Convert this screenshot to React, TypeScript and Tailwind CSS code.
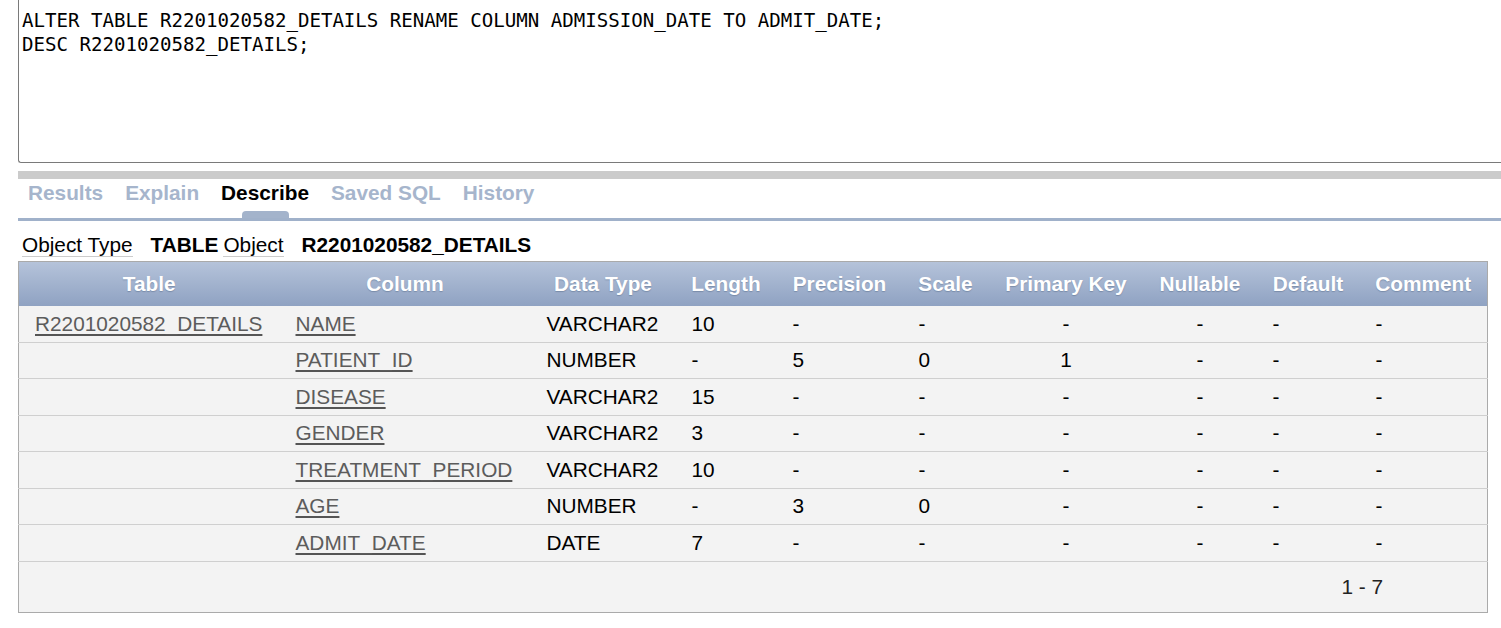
import React from "react";

const cols = [
  { name: "Table", w: 261, align: "left" },
  { name: "Column", w: 251, align: "left" },
  { name: "Data Type", w: 145, align: "left" },
  { name: "Length", w: 101, align: "left" },
  { name: "Precision", w: 126, align: "left" },
  { name: "Scale", w: 86, align: "left" },
  { name: "Primary Key", w: 155, align: "center" },
  { name: "Nullable", w: 113, align: "center" },
  { name: "Default", w: 103, align: "left" },
  { name: "Comment", w: 128, align: "left" },
];

const rows = [
  ["NAME", "VARCHAR2", "10", "-", "-", "-"],
  ["PATIENT_ID", "NUMBER", "-", "5", "0", "1"],
  ["DISEASE", "VARCHAR2", "15", "-", "-", "-"],
  ["GENDER", "VARCHAR2", "3", "-", "-", "-"],
  ["TREATMENT_PERIOD", "VARCHAR2", "10", "-", "-", "-"],
  ["AGE", "NUMBER", "-", "3", "0", "-"],
  ["ADMIT_DATE", "DATE", "7", "-", "-", "-"],
];

const tabs = ["Results", "Explain", "Describe", "Saved SQL", "History"];

function Cell({ children, center }: { children?: React.ReactNode; center?: boolean }) {
  return (
    <td
      className={
        center
          ? "h-[36.5px] border-b border-[#cfcfcf] text-center align-middle"
          : "h-[36.5px] border-b border-[#cfcfcf] pl-4 text-left align-middle"
      }
    >
      {children}
    </td>
  );
}

export default function App() {
  return (
    <div className="min-h-screen bg-white pl-[18px] font-['Liberation_Sans',Arial,sans-serif] text-[20.8px] text-black">
      {/* sql editor */}
      <div className="h-[163px] rounded-bl-[3px] border-b border-l border-[#7a7a7a] pl-[3px] pt-[9px] font-['DejaVu_Sans_Mono',monospace] text-[19.1px] leading-[24px]">
        <div>ALTER TABLE R2201020582_DETAILS RENAME COLUMN ADMISSION_DATE TO ADMIT_DATE;</div>
        <div>DESC R2201020582_DETAILS;</div>
      </div>

      <div className="mt-2 h-[8px] bg-[#cbcbcb]" />

      {/* tabs */}
      <div className="flex gap-[22px] pl-[10px] pt-[2px] font-bold leading-[24px]">
        {tabs.map((t) => (
          <div key={t} className="flex flex-col items-center">
            <span className={t === "Describe" ? "text-black" : "text-[#a6b5cc]"}>{t}</span>
            <div
              className={
                t === "Describe"
                  ? "mt-[6px] h-[7px] w-[47px] rounded-t-[4px] bg-[#a3b3cb]"
                  : "mt-[6px] h-[7px] w-[47px]"
              }
            />
          </div>
        ))}
      </div>
      <div className="h-[3px] bg-[#a0b1ca]" />

      {/* object info */}
      <div className="mt-3 pl-1 leading-[24px]">
        <span className="border-b border-[#cccccc]">Object Type</span>
        <span className="ml-[18px] font-bold">TABLE</span>
        <span className="ml-[5px] border-b border-[#cccccc]">Object</span>
        <span className="ml-[18px] font-bold">R2201020582_DETAILS</span>
      </div>

      <table className="mt-1 w-[1469px] table-fixed border-collapse border border-[#aaaaaa] bg-[#f3f3f3] leading-[24px]">
        <colgroup>
          {cols.map((c) => (
            <col key={c.name} style={{ width: c.w }} />
          ))}
        </colgroup>
        <thead>
          <tr className="h-[44px] bg-linear-to-b from-[#b5c3da] to-[#8fa2c2]">
            {cols.map((c) => (
              <th
                key={c.name}
                className="text-center font-bold text-white [text-shadow:0_1px_1px_rgba(60,80,110,0.35)]"
              >
                {c.name}
              </th>
            ))}
          </tr>
        </thead>
        <tbody>
          {rows.map((r, i) => (
            <tr key={r[0]}>
              <Cell>
                {i === 0 && (
                  <a href="#" className="text-[#5c5c5c] underline decoration-[#555] underline-offset-[3px]">
                    R2201020582_DETAILS
                  </a>
                )}
              </Cell>
              <Cell>
                <a href="#" className="text-[#5c5c5c] underline decoration-[#555] underline-offset-[3px]">
                  {r[0]}
                </a>
              </Cell>
              <Cell>{r[1]}</Cell>
              <Cell>{r[2]}</Cell>
              <Cell>{r[3]}</Cell>
              <Cell>{r[4]}</Cell>
              <Cell center>{r[5]}</Cell>
              <Cell center>-</Cell>
              <Cell>-</Cell>
              <Cell>-</Cell>
            </tr>
          ))}
          <tr>
            <td colSpan={10} className="h-[51px] pr-[104px] text-right align-middle text-[#222]">
              1 - 7
            </td>
          </tr>
        </tbody>
      </table>
    </div>
  );
}
